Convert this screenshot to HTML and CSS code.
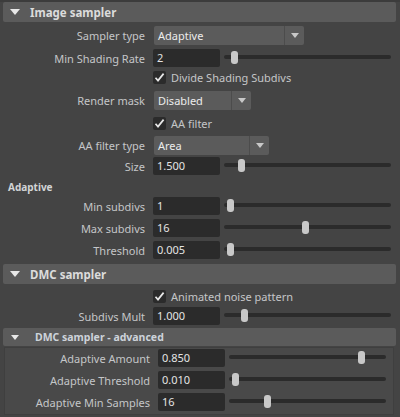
FILE: index.html
```html
<!DOCTYPE html>
<html>
<head>
<meta charset="utf-8">
<link rel="stylesheet" href="styles.css">
</head>
<body>
<div class="panel">
  <div class="header h1"><span class="tri"></span><span class="htext">Image sampler</span></div>

  <div class="row r19 m4">
    <div class="label">Sampler type</div>
    <div class="dropdown w-st"><div class="dd-field">Adaptive</div><div class="dd-arrow"><span class="dtri"></span></div></div>
  </div>
  <div class="row r18 m4">
    <div class="label">Min Shading Rate</div>
    <div class="input">2</div>
    <div class="slider"><div class="track"></div><div class="handle" style="left:7px"></div></div>
  </div>
  <div class="row r15 m3">
    <div class="label"></div>
    <div class="check"><span class="box"><svg viewBox="0 0 13 13" width="13" height="13"><path d="M2.5 6.8 L5 9.6 L10.6 2.6" fill="none" stroke="#e8e8e8" stroke-width="1.7"/></svg></span><span class="ctext">Divide Shading Subdivs</span></div>
  </div>
  <div class="row r19 m6">
    <div class="label">Render mask</div>
    <div class="dropdown w-rm"><div class="dd-field">Disabled</div><div class="dd-arrow"><span class="dtri"></span></div></div>
  </div>
  <div class="row r15 m6">
    <div class="label"></div>
    <div class="check"><span class="box"><svg viewBox="0 0 13 13" width="13" height="13"><path d="M2.5 6.8 L5 9.6 L10.6 2.6" fill="none" stroke="#e8e8e8" stroke-width="1.7"/></svg></span><span class="ctext">AA filter</span></div>
  </div>
  <div class="row r18 m5">
    <div class="label">AA filter type</div>
    <div class="dropdown w-aa"><div class="dd-field">Area</div><div class="dd-arrow"><span class="dtri"></span></div></div>
  </div>
  <div class="row r18 m3">
    <div class="label">Size</div>
    <div class="input">1.500</div>
    <div class="slider"><div class="track"></div><div class="handle" style="left:14px"></div></div>
  </div>

  <div class="subtitle">Adaptive</div>

  <div class="row r18 m2">
    <div class="label">Min subdivs</div>
    <div class="input">1</div>
    <div class="slider"><div class="track"></div><div class="handle" style="left:3px"></div></div>
  </div>
  <div class="row r18 m4">
    <div class="label">Max subdivs</div>
    <div class="input">16</div>
    <div class="slider"><div class="track"></div><div class="handle" style="left:78px"></div></div>
  </div>
  <div class="row r18 m4">
    <div class="label">Threshold</div>
    <div class="input">0.005</div>
    <div class="slider"><div class="track"></div><div class="handle" style="left:3px"></div></div>
  </div>

  <div class="header h2"><span class="tri"></span><span class="htext">DMC sampler</span></div>

  <div class="row r15 m5">
    <div class="label"></div>
    <div class="check"><span class="box"><svg viewBox="0 0 13 13" width="13" height="13"><path d="M2.5 6.8 L5 9.6 L10.6 2.6" fill="none" stroke="#e8e8e8" stroke-width="1.7"/></svg></span><span class="ctext">Animated noise pattern</span></div>
  </div>
  <div class="row r18 m3">
    <div class="label">Subdivs Mult</div>
    <div class="input">1.000</div>
    <div class="slider"><div class="track"></div><div class="handle" style="left:17px"></div></div>
  </div>

  <div class="header h3"><span class="tri small"></span><span class="htext sm">DMC sampler - advanced</span></div>
  <div class="frame">
    <div class="row r18 adv">
      <div class="label">Adaptive Amount</div>
      <div class="input">0.850</div>
      <div class="slider"><div class="track"></div><div class="handle" style="left:129px"></div></div>
    </div>
    <div class="row r18 adv m4">
      <div class="label">Adaptive Threshold</div>
      <div class="input">0.010</div>
      <div class="slider"><div class="track"></div><div class="handle" style="left:3px"></div></div>
    </div>
    <div class="row r18 adv m4">
      <div class="label">Adaptive Min Samples</div>
      <div class="input">16</div>
      <div class="slider"><div class="track"></div><div class="handle" style="left:35px"></div></div>
    </div>
  </div>
</div>
</body>
</html>
```

FILE: styles.css
```css
html, body {
  margin: 0;
  padding: 0;
  background: #444444;
  width: 400px;
  height: 417px;
  overflow: hidden;
}
body {
  font-family: "Noto Sans", "DejaVu Sans", sans-serif;
  font-size: 11px;
  color: #c4c6c8;
}
.panel {
  border-top: 2px solid #3c3c3c;
  height: 415px;
  background: #444444;
}
.header {
  display: flex;
  align-items: center;
  margin: 0 4px 0 3px;
  height: 20px;
  background: #5b5b5b;
  border-radius: 2px;
}
.h2 { margin-top: 5px; }
.h3 { margin-top: 3px; height: 18px; }
.tri {
  width: 0;
  height: 0;
  margin-left: 7px;
  border-left: 5.5px solid transparent;
  border-right: 5.5px solid transparent;
  border-top: 6px solid #e8e8e8;
}
.tri.small {
  margin-left: 8px;
  border-left-width: 4.5px;
  border-right-width: 4.5px;
  border-top-width: 5px;
}
.htext {
  margin-left: 10px;
  font-weight: bold;
  font-size: 11.5px;
  color: #dcdcdc;
}
.htext.sm {
  margin-left: 16px;
  font-size: 10.5px;
  color: #cdd3da;
}
.row {
  display: flex;
  align-items: center;
}
.r15 { height: 15px; }
.r18 { height: 18px; }
.r19 { height: 19px; }
.m2 { margin-top: 2px; }
.m3 { margin-top: 3px; }
.m4 { margin-top: 4px; }
.m5 { margin-top: 5px; }
.m6 { margin-top: 6px; }
.label {
  width: 145px;
  flex: none;
  text-align: right;
  white-space: nowrap;
  color: #c4c6c8;
}
.input {
  flex: none;
  margin-left: 8px;
  width: 63px;
  height: 18px;
  line-height: 18px;
  padding-left: 4px;
  background: #2b2b2b;
  border-radius: 2px;
  color: #e4e4e4;
}
.slider {
  position: relative;
  flex: 1;
  height: 18px;
  margin-left: 4px;
  margin-right: 9px;
}
.track {
  position: absolute;
  left: 0;
  right: 0;
  top: 6px;
  height: 4px;
  border-radius: 2px;
  background: #2b2b2b;
}
.handle {
  position: absolute;
  top: 2px;
  width: 7px;
  height: 13px;
  border-radius: 3px;
  background: #c8c8c8;
}
.dropdown {
  display: flex;
  margin-left: 9px;
  height: 19px;
  gap: 1px;
}
.dd-field {
  flex: 1;
  background: #5b5b5b;
  border-radius: 2px 0 0 2px;
  padding-left: 4px;
  line-height: 19px;
  color: #ececec;
}
.dd-arrow {
  width: 19px;
  background: #5b5b5b;
  border-radius: 0 2px 2px 0;
  display: flex;
  align-items: center;
  justify-content: center;
  box-shadow: -1px 0 0 #4c4c4c;
}
.dtri {
  width: 0;
  height: 0;
  border-left: 4.5px solid transparent;
  border-right: 4.5px solid transparent;
  border-top: 5px solid #c8c8c8;
}
.w-st { width: 150px; }
.w-rm { width: 97px; }
.w-aa { width: 115px; }
.check {
  display: flex;
  align-items: center;
  margin-left: 8px;
}
.box {
  width: 13px;
  height: 13px;
  background: #2b2b2b;
  border-radius: 2px;
  display: block;
}
.box svg { display: block; }
.ctext {
  margin-left: 5px;
  color: #c4c6c8;
}
.subtitle {
  margin-top: 5px;
  height: 15px;
  line-height: 15px;
  padding-left: 8px;
  font-weight: bold;
  font-size: 10px;
  color: #d2d4d6;
}
.frame {
  margin: 1px 6px 0 4px;
  height: 65px;
  padding-top: 1px;
  background: #494949;
  border: 1px solid #3f3f3f;
}
.adv .label { width: 145px; }
.adv .slider { margin-right: 7px; }
```
